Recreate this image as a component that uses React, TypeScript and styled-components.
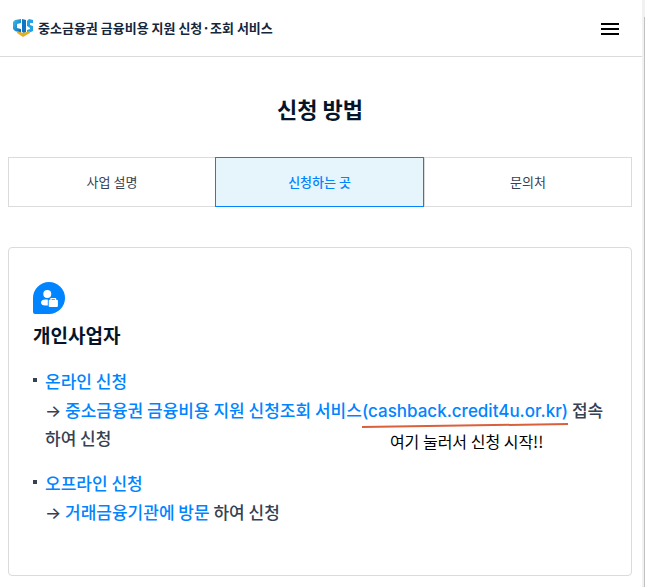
import React from "react";
import styled, { createGlobalStyle } from "styled-components";

const GlobalStyle = createGlobalStyle`
  * { box-sizing: border-box; }
  html, body, #root { height: 100%; }
  body {
    margin: 0;
    background: #fff;
    color: #364152;
    font-family: "Noto Sans CJK KR", sans-serif;
  }
  button { font: inherit; cursor: pointer; }
  h1, h2, h3, p, ul { margin: 0; padding: 0; }
`;

const Shell = styled.div`
  display: flex;
  min-height: 100%;
`;

const Page = styled.div`
  flex: 1;
  min-width: 0;
`;

const ScrollTrack = styled.div`
  width: 3px;
  padding: 17px 0 0 2px;
  display: flex;
  background: #f1f1f1;
`;

const ScrollThumb = styled.div`
  flex: 1;
  background: #c1c1c1;
`;

const Header = styled.header`
  display: flex;
  align-items: center;
  justify-content: space-between;
  height: 57px;
  padding: 0 20px 0 12px;
  border-bottom: 1px solid #dbdbdb;
`;

const Brand = styled.a`
  display: flex;
  align-items: center;
  gap: 4px;
  color: #16263c;
  font-size: 13px;
  font-weight: 700;
  line-height: 20px;
  text-decoration: none;
  white-space: nowrap;
`;

const MenuButton = styled.button`
  display: flex;
  margin-top: 2px;
  padding: 0;
  border: 0;
  background: none;
`;

const Main = styled.main`
  padding: 35px 10px 10px 8px;
`;

const Title = styled.h1`
  color: #051529;
  font-size: 22px;
  line-height: 32px;
  text-align: center;
`;

const Tabs = styled.div`
  display: grid;
  grid-template-columns: repeat(3, 1fr);
  margin-top: 33px;
`;

const Tab = styled.button<{ $active?: boolean }>`
  height: 50px;
  padding: 0;
  border: 1px solid ${(p) => (p.$active ? "#0084ff" : "#dbdbdb")};
  margin-left: ${(p) => (p.$active ? "-1px" : "0")};
  z-index: ${(p) => (p.$active ? 1 : 0)};
  background: ${(p) => (p.$active ? "#e6f4fc" : "#fff")};
  color: ${(p) => (p.$active ? "#0084ff" : "#364152")};
  font-size: 13px;
  font-weight: ${(p) => (p.$active ? 500 : 400)};
  line-height: 20px;
`;

const Card = styled.section`
  margin-top: 40px;
  padding: 34px 24px 49px;
  border: 1px solid #dbdbdb;
  border-radius: 4px;
`;

const CardTitle = styled.h2`
  margin-top: 7px;
  color: #051529;
  font-size: 19px;
  line-height: 28px;
`;

const List = styled.ul`
  display: grid;
  gap: 16px;
  margin-top: 17px;
  list-style: none;
`;

const Item = styled.li`
  display: grid;
  grid-template-columns: 4px 1fr;
  column-gap: 8px;
  font-size: 17px;
  font-weight: 500;
  line-height: 28px;

  &::before {
    content: "";
    height: 4px;
    margin-top: 12px;
    background: #364152;
  }
`;

const ItemTitle = styled.h3`
  color: #0084ff;
  font: inherit;
  line-height: 30px;
`;

const Arrow = styled.span`
  font-family: Inter, sans-serif;
  line-height: 20px;
`;

const Highlight = styled.span`
  color: #0084ff;
`;

const SiteLink = styled.a`
  color: #0084ff;
  text-decoration: none;
`;

const Marked = styled.span`
  position: relative;
  display: inline-block;
  font-family: Inter, sans-serif;
  line-height: 24px;
`;

const Underline = styled.svg`
  position: absolute;
  left: 0;
  top: 24px;
  width: 100%;
  height: 6px;
`;

const Note = styled.span`
  position: absolute;
  left: 28px;
  top: 30px;
  color: #000;
  font: 400 16px/24px "Noto Sans CJK KR", sans-serif;
  white-space: nowrap;
`;

const BrandMark = () => (
  <svg width="22" height="18" viewBox="0 0 22 18" aria-hidden="true">
    <defs>
      <linearGradient id="mark" x1="0" y1="0" x2="1" y2="1">
        <stop offset="0" stopColor="#3cc3ee" />
        <stop offset="1" stopColor="#0a62b5" />
      </linearGradient>
    </defs>
    <path d="M9 0V4L5 5V9L9 10V14L3 12L1 10V3L3 1Z" fill="url(#mark)" />
    <path d="M10 0L14 1V13L12 14L10 13Z" fill="#0f74c4" />
    <path d="M21 1V4L18 4V6L21 7V12L19 13L15 14V11L18 10V9L15 7V2L17 0Z" fill="#23a3e6" />
    <path d="M5 12L11 14L18 12V14L11 18L5 14Z" fill="#e3b021" />
  </svg>
);

const OwnerIcon = () => (
  <svg width="32" height="32" viewBox="0 0 32 32" display="block" aria-hidden="true">
    <path d="M16 0A16 16 0 0 1 16 32H2A2 2 0 0 1 0 30V16A16 16 0 0 1 16 0Z" fill="#0084ff" />
    <circle cx="14.3" cy="12" r="4" fill="#fff" />
    <path d="M8 20.5C8 18.5 10 17.5 12 17.5H14.8V23.5H12C9.5 23.5 8 22.5 8 20.5Z" fill="#fff" />
    <path d="M18 18V16.5H22.5V18" fill="none" stroke="#fff" strokeWidth="1.2" />
    <rect x="15.7" y="17.8" width="9.2" height="7.2" rx="1" fill="#fff" />
  </svg>
);

export default function App() {
  return (
    <>
      <GlobalStyle />
      <Shell>
        <Page>
          <Header>
            <Brand href="#">
              <BrandMark />
              중소금융권 금융비용 지원 신청·조회 서비스
            </Brand>
            <MenuButton aria-label="메뉴">
              <svg width="24" height="24" viewBox="0 0 24 24" aria-hidden="true">
                <path d="M3 7H21M3 12H21M3 17H21" stroke="#000" strokeWidth="2" />
              </svg>
            </MenuButton>
          </Header>
          <Main>
            <Title>신청 방법</Title>
            <Tabs role="tablist">
              <Tab role="tab" aria-selected="false">사업 설명</Tab>
              <Tab role="tab" aria-selected="true" $active>신청하는 곳</Tab>
              <Tab role="tab" aria-selected="false">문의처</Tab>
            </Tabs>
            <Card>
              <OwnerIcon />
              <CardTitle>개인사업자</CardTitle>
              <List>
                <Item>
                  <div>
                    <ItemTitle>온라인 신청</ItemTitle>
                    <p>
                      <Arrow>→</Arrow>{" "}
                      <SiteLink href="#">
                        중소금융권 금융비용 지원 신청조회 서비스
                        <Marked>
                          (cashback.credit4u.or.kr)
                          <Underline viewBox="0 0 206 6" preserveAspectRatio="none" aria-hidden="true">
                            <path d="M0 4L206 1" stroke="#d9603b" strokeWidth="2" />
                          </Underline>
                          <Note>여기 눌러서 신청 시작!!</Note>
                        </Marked>
                      </SiteLink>{" "}
                      접속하여 신청
                    </p>
                  </div>
                </Item>
                <Item>
                  <div>
                    <ItemTitle>오프라인 신청</ItemTitle>
                    <p>
                      <Arrow>→</Arrow> <Highlight>거래금융기관에 방문</Highlight> 하여 신청
                    </p>
                  </div>
                </Item>
              </List>
            </Card>
          </Main>
        </Page>
        <ScrollTrack>
          <ScrollThumb />
        </ScrollTrack>
      </Shell>
    </>
  );
}
